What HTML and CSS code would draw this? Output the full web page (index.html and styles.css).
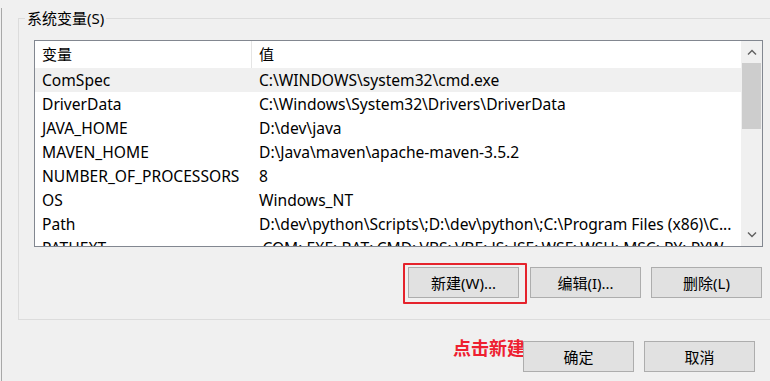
FILE: index.html
```html
<!DOCTYPE html>
<html lang="zh-CN">
<head>
<meta charset="utf-8">
<title>系统变量</title>
<link rel="stylesheet" href="styles.css">
</head>
<body>
<div class="window">
  <fieldset class="group">
    <legend class="group-title">系统变量(S)</legend>
    <div class="listbox">
      <div class="list-main">
        <div class="list-header">
          <div class="col-name">变量</div>
          <div class="col-value">值</div>
        </div>
        <div class="row hover"><div class="col-name">ComSpec</div><div class="col-value">C:\WINDOWS\system32\cmd.exe</div></div>
        <div class="row"><div class="col-name">DriverData</div><div class="col-value">C:\Windows\System32\Drivers\DriverData</div></div>
        <div class="row"><div class="col-name">JAVA_HOME</div><div class="col-value">D:\dev\java</div></div>
        <div class="row"><div class="col-name">MAVEN_HOME</div><div class="col-value">D:\Java\maven\apache-maven-3.5.2</div></div>
        <div class="row"><div class="col-name">NUMBER_OF_PROCESSORS</div><div class="col-value">8</div></div>
        <div class="row"><div class="col-name">OS</div><div class="col-value">Windows_NT</div></div>
        <div class="row"><div class="col-name">Path</div><div class="col-value">D:\dev\python\Scripts\;D:\dev\python\;C:\Program Files (x86)\C...</div></div>
        <div class="row"><div class="col-name">PATHEXT</div><div class="col-value">.COM;.EXE;.BAT;.CMD;.VBS;.VBE;.JS;.JSE;.WSF;.WSH;.MSC;.PY;.PYW</div></div>
      </div>
      <div class="scrollbar">
        <div class="sb-btn">
          <svg width="10" height="6" viewBox="0 0 10 6"><polyline points="1,5.5 5,1.5 9,5.5" fill="none" stroke="#606060" stroke-width="1.4"/></svg>
        </div>
        <div class="sb-track"><div class="sb-thumb"></div></div>
        <div class="sb-btn">
          <svg width="10" height="6" viewBox="0 0 10 6"><polyline points="1,0.5 5,4.5 9,0.5" fill="none" stroke="#606060" stroke-width="1.4"/></svg>
        </div>
      </div>
    </div>
    <div class="group-actions">
      <span class="highlight"><button class="btn">新建(W)...</button></span>
      <button class="btn">编辑(I)...</button>
      <button class="btn">删除(L)</button>
    </div>
  </fieldset>
  <div class="dialog-footer">
    <span class="annotation">点击新建</span>
    <button class="btn">确定</button>
    <button class="btn">取消</button>
  </div>
</div>
</body>
</html>
```

FILE: styles.css
```css
html, body {
  margin: 0;
  padding: 0;
  width: 770px;
  height: 381px;
  overflow: hidden;
  background: #f0f0f0;
}

body {
  font-family: "Noto Sans", "Noto Sans CJK SC", sans-serif;
  font-size: 15px;
  color: #000;
}

.window {
  margin-left: 1px;
  border-left: 1px solid #a8a8a8;
  height: 381px;
  padding-right: 15px;
}

.group {
  margin: 8px 0 0 16px;
  padding: 12px 20px 15px 15px;
  border: 1px solid #dcdcdc;
  width: 729px;
  min-width: 0;
}

.group-title {
  margin-left: -9px;
  padding: 0 2px;
  line-height: 20px;
  height: 20px;
}

.listbox {
  display: flex;
  width: 729px;
  height: 207px;
  box-sizing: border-box;
  border: 1px solid #828790;
  background: #fff;
  overflow: hidden;
}

.list-main {
  flex: 1;
  overflow: hidden;
}

.list-header {
  display: flex;
  height: 27px;
  line-height: 27px;
  background: #fff;
}

.list-header .col-name {
  border-right: 1px solid #e5e5e5;
}

.row {
  display: flex;
  height: 24px;
  line-height: 24px;
  white-space: nowrap;
  font-size: 15.6px;
}

.row.hover {
  background: #f0f0f0;
}

.col-name {
  width: 217px;
  box-sizing: border-box;
  padding-left: 7px;
  flex: none;
  overflow: hidden;
}

.col-value {
  flex: 1;
  padding-left: 7px;
  overflow: hidden;
  white-space: nowrap;
}

.scrollbar {
  width: 21px;
  flex: none;
  display: flex;
  flex-direction: column;
  background: #f0f0f0;
}

.sb-btn {
  height: 22px;
  display: flex;
  align-items: center;
  justify-content: center;
}

.sb-track {
  flex: 1;
}

.sb-thumb {
  margin: 0 1px;
  height: 66px;
  background: #cdcdcd;
}

.group-actions {
  display: flex;
  justify-content: flex-end;
  align-items: flex-start;
  gap: 10px;
  margin-top: 16px;
  padding-right: 1px;
}

.highlight {
  display: flex;
  border: 2px solid #e5232c;
  padding: 2px 6px 4px 3px;
  border-radius: 1px;
  margin-right: -7px;
}

.btn {
  width: 111px;
  height: 31px;
  box-sizing: border-box;
  border: 1px solid #adadad;
  background: #e1e1e1;
  font-family: "Noto Sans", "Noto Sans CJK SC", sans-serif;
  font-size: 15px;
  color: #000;
  padding: 0;
  margin: 0;
}

.group-actions > .btn {
  margin-top: 4px;
}

.dialog-footer {
  display: flex;
  justify-content: flex-end;
  align-items: flex-start;
  margin-top: 17px;
  gap: 10px;
}

.dialog-footer > .btn {
  margin-top: 4px;
}

.annotation {
  width: 70px;
  margin-right: -10px;
  overflow: hidden;
  white-space: nowrap;
  font-family: "Noto Sans CJK SC", serif;
  font-weight: 700;
  font-size: 18px;
  line-height: 20px;
  color: #ee2030;
}
```
